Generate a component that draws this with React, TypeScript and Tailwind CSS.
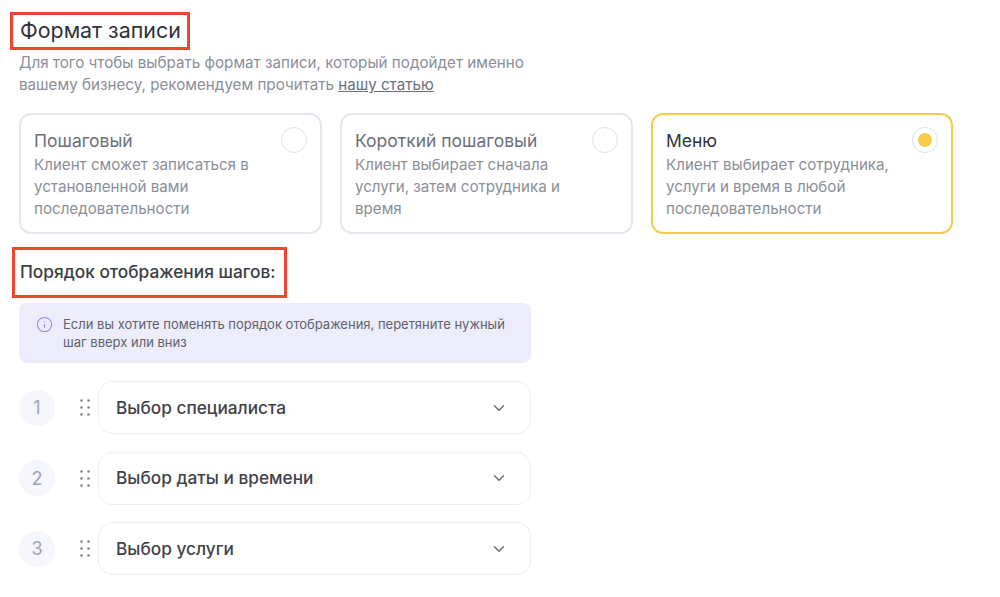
import { ChevronDown, Info } from "lucide-react";

const formats = [
  {
    title: "Пошаговый",
    lines: ["Клиент сможет записаться в", "установленной вами", "последовательности"],
    width: "w-[303px]",
  },
  {
    title: "Короткий пошаговый",
    lines: ["Клиент выбирает сначала", "услуги, затем сотрудника и", "время"],
    width: "w-[293px]",
  },
  {
    title: "Меню",
    lines: ["Клиент выбирает сотрудника,", "услуги и время в любой", "последовательности"],
    width: "w-[302px]",
    active: true,
  },
];

const steps = ["Выбор специалиста", "Выбор даты и времени", "Выбор услуги"];

const DragHandle = () => (
  <svg width="10" height="17" viewBox="0 0 10 17" className="fill-[#7d818d]">
    <circle cx="1.5" cy="1.5" r="1.25" />
    <circle cx="8.5" cy="1.5" r="1.25" />
    <circle cx="1.5" cy="8.5" r="1.25" />
    <circle cx="8.5" cy="8.5" r="1.25" />
    <circle cx="1.5" cy="15.5" r="1.25" />
    <circle cx="8.5" cy="15.5" r="1.25" />
  </svg>
);

export default function App() {
  return (
    <div className="h-[597px] w-[1000px] overflow-hidden bg-white pt-3 font-['Inter',sans-serif]">
      <div className="ml-[10px] flex h-[38px] w-[180px] items-center border-[3px] border-[#ee4630] pb-[1px] pl-[7px]">
        <h1 className="text-[21.4px] leading-none whitespace-nowrap text-[#2f3238]">Формат записи</h1>
      </div>

      <p className="mt-[2px] ml-[19px] text-[15.2px] leading-[22px] text-[#8b8e99]">
        Для того чтобы выбрать формат записи, который подойдет именно
        <br />
        вашему бизнесу, рекомендуем прочитать <span className="text-[#6c6f7a] underline">нашу статью</span>
      </p>

      <div className="mt-[17px] ml-[19px] flex gap-[18px]">
        {formats.map((f) => (
          <div
            key={f.title}
            className={`relative h-[121px] ${f.width} rounded-[12px] border-2 pt-[15px] pl-[13px] ${
              f.active ? "border-[#f7cb4a]" : "border-[#e5e7f0]"
            }`}
          >
            <div className={`text-[17.5px] leading-[22px] ${f.active ? "text-[#2f3238]" : "text-[#6c6f7a]"}`}>{f.title}</div>
            <div className="mt-[2px] text-[15.15px] leading-[22px] text-[#8b8e99]">
              {f.lines.map((l) => (
                <div key={l}>{l}</div>
              ))}
            </div>
            <div className="absolute top-[12px] right-[13px] flex h-[26px] w-[26px] items-center justify-center rounded-full border-[1.5px] border-[#dfe1ea] bg-white">
              {f.active && <div className="h-[14px] w-[14px] rounded-full bg-[#f7cb4a]" />}
            </div>
          </div>
        ))}
      </div>

      <div className="mt-[13px] ml-[12px] flex h-[51px] w-[275px] items-center border-[3px] border-[#ee4630] pb-[2px] pl-[5px]">
        <h2 className="text-[17.3px] leading-none font-medium whitespace-nowrap text-[#3a3d44]">Порядок отображения шагов:</h2>
      </div>

      <div className="mt-[5px] ml-[19px] flex h-[60px] w-[512px] gap-[10px] rounded-[8px] bg-[#edecfa] pt-[12px] pl-[17px]">
        <Info size={17} strokeWidth={1.5} className="mt-[1px] shrink-0 text-[#8b86f0]" />
        <p className="text-[13px] leading-[18px] text-[#5f626d]">
          Если вы хотите поменять порядок отображения, перетяните нужный
          <br />
          шаг вверх или вниз
        </p>
      </div>

      <div className="mt-[18px] ml-[19px] flex flex-col gap-[17.5px]">
        {steps.map((s, i) => (
          <div key={s} className="flex items-center">
            <div className="flex h-[36px] w-[36px] items-center justify-center rounded-full bg-[#f5f6fb] text-[18px] text-[#9ea2b0]">
              {i + 1}
            </div>
            <div className="ml-[25px] flex w-[18px] shrink-0">
              <DragHandle />
            </div>
            <div className="flex h-[53px] w-[433px] items-center justify-between rounded-[14px] border border-[#eceef3] pr-[22px] pl-[17px]">
              <span className="text-[17.25px] font-medium text-[#3f4249]">{s}</span>
              <ChevronDown size={18} strokeWidth={2} className="text-[#6c6f7a]" />
            </div>
          </div>
        ))}
      </div>
    </div>
  );
}
